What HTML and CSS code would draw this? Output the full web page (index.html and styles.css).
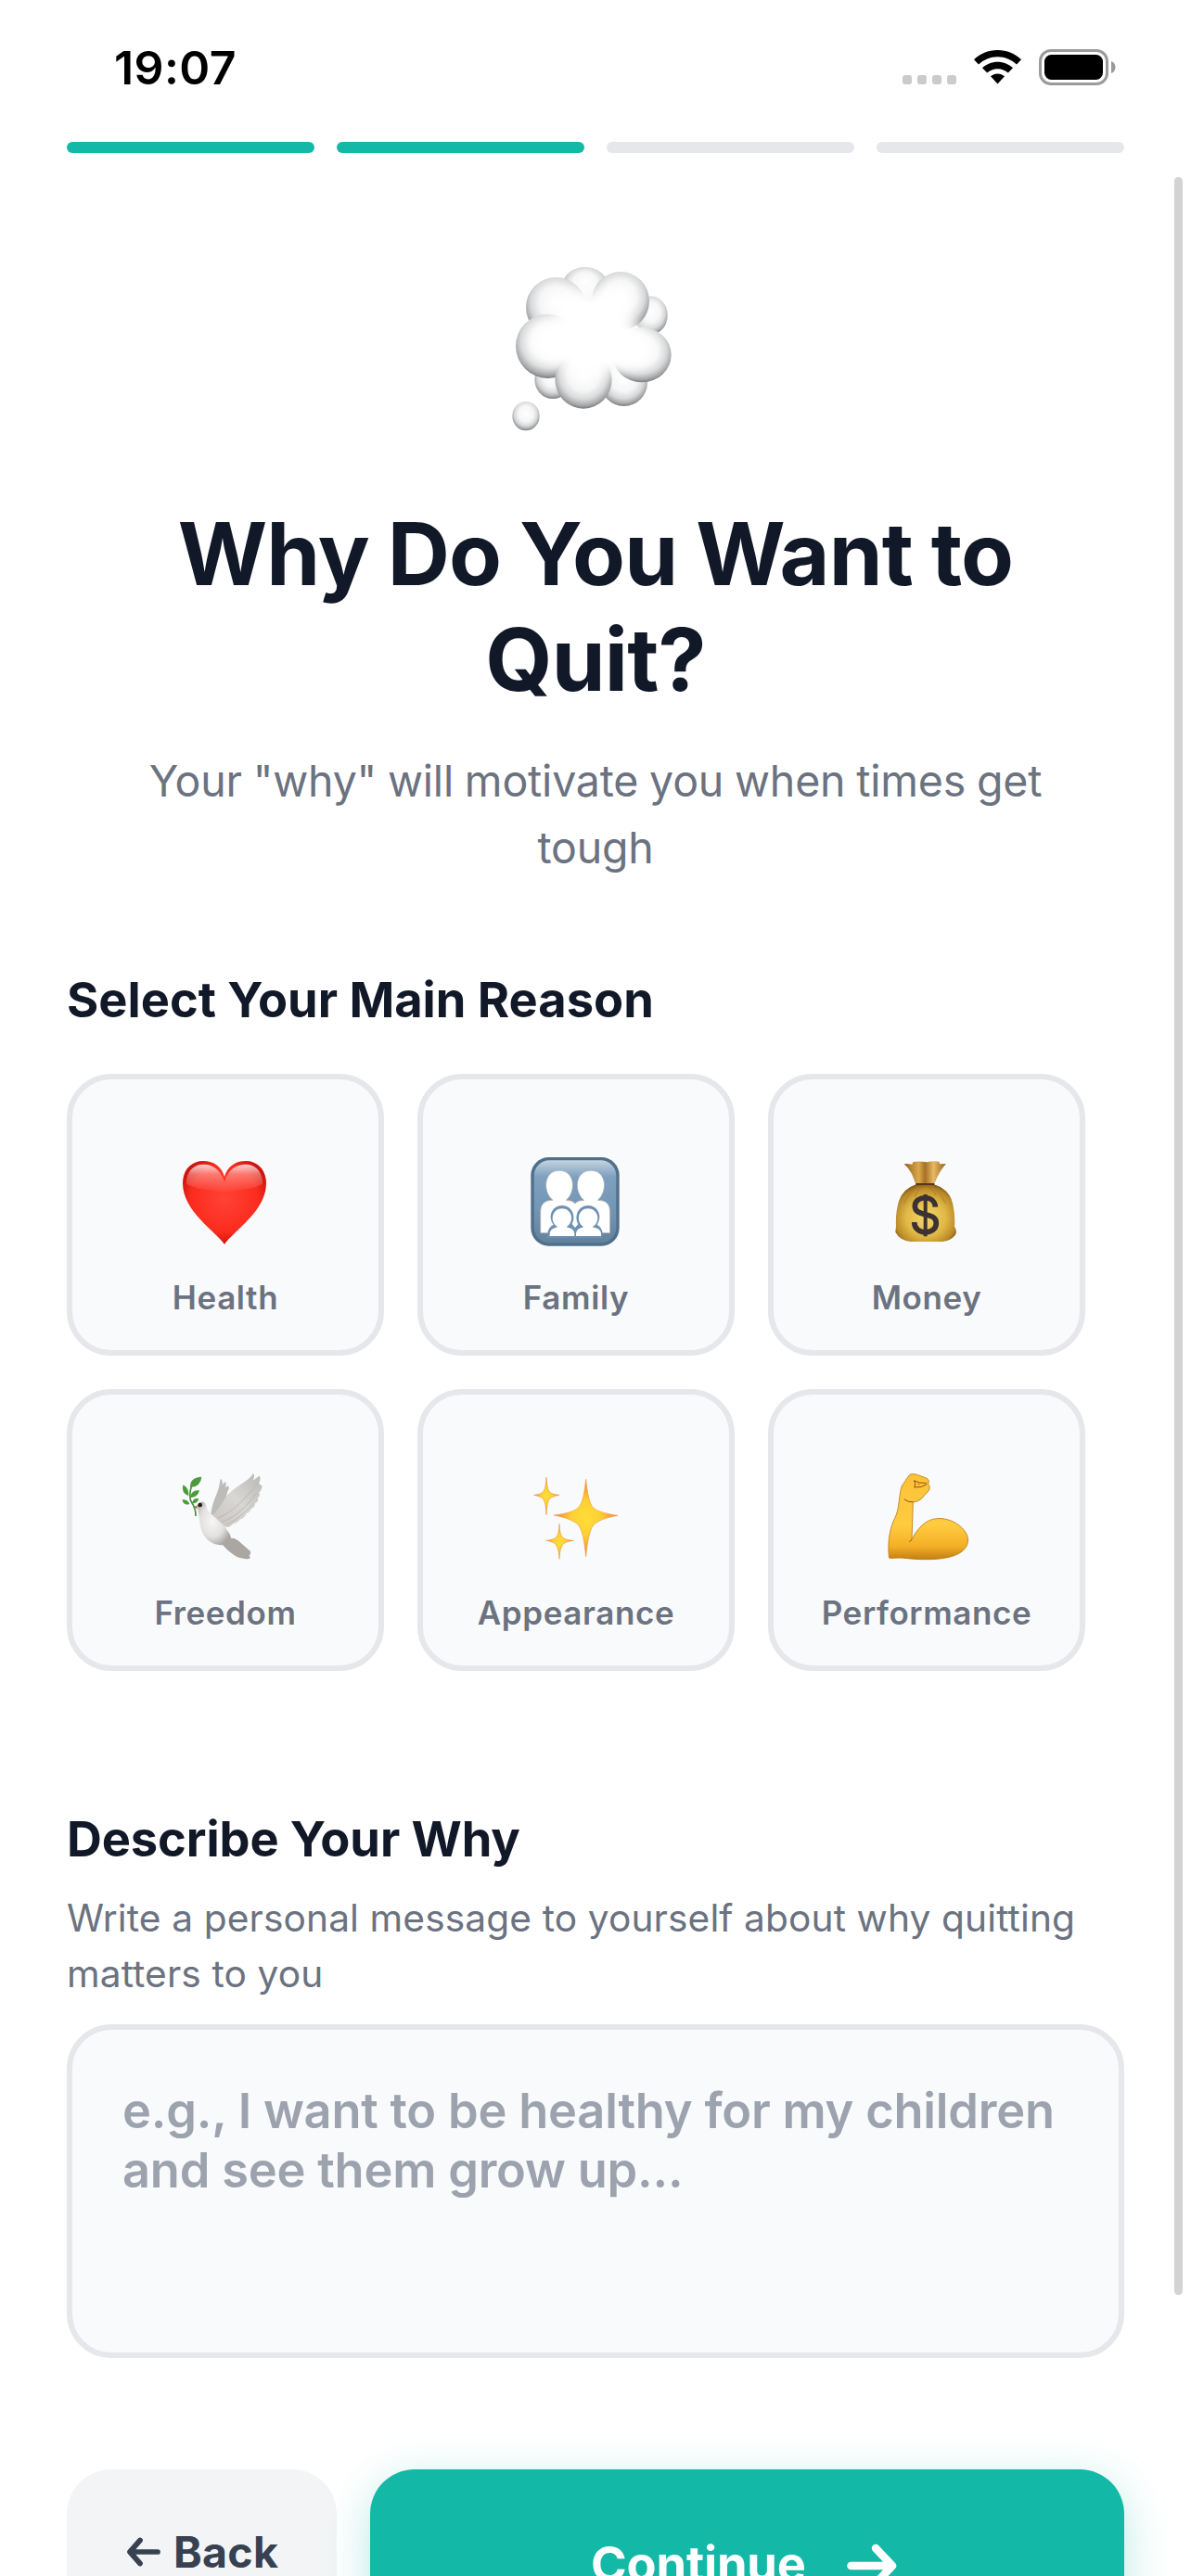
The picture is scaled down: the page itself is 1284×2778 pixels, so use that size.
FILE: index.html
```html
<!DOCTYPE html>
<html lang="en">
<head>
<meta charset="utf-8">
<title>Why Do You Want to Quit?</title>
<link rel="stylesheet" href="styles.css">
</head>
<body>
<div class="screen">
  <header class="status-bar">
    <span class="time">19:07</span>
    <div class="status-icons">
      <svg class="cellular" viewBox="0 0 58 10"><g fill="#cbcbcb"><rect width="10" height="10" rx="3"/><rect x="16" width="10" height="10" rx="3"/><rect x="32" width="10" height="10" rx="3"/><rect x="48" width="10" height="10" rx="3"/></g></svg>
      <svg class="wifi" viewBox="0 0 51 37"><path d="M25.500 0C35.500 0 44.500 4 51 10.300L46 15.500C40.500 10.300 33.500 7.200 25.500 7.200S10.500 10.300 5 15.500L0 10.300C6.500 4 15.500 0 25.500 0Z"/><path d="M25.500 12.800C31.800 12.800 37.600 15.300 42 19.300L36.800 24.600C33.700 21.800 29.800 20.200 25.500 20.200S17.300 21.800 14.200 24.600L9 19.300C13.400 15.300 19.200 12.800 25.500 12.800Z"/><path d="M25.500 25.400C28.400 25.400 31 26.500 33 28.300L25.500 36.600L18 28.300C20 26.500 22.600 25.400 25.500 25.400Z"/></svg>
      <svg class="battery" viewBox="0 0 83 39"><rect x="1.500" y="1.500" width="72" height="36" rx="11.500" fill="none" stroke="#9b9b9b" stroke-width="3"/><rect x="6" y="6" width="63" height="27" rx="7.500"/><path d="M78 13C84 15 84 24 78 26Z" fill="#9b9b9b"/></svg>
    </div>
  </header>
  <div class="progress"><i class="step done"></i><i class="step done"></i><i class="step"></i><i class="step"></i></div>

  <main class="content">
    <svg class="hero" viewBox="0 0 720 660">
      <defs>
        <radialGradient id="puff" cx=".5" cy=".42" r=".6"><stop offset="0" stop-color="#fff"/><stop offset=".45" stop-color="#f6f6f6"/><stop offset=".7" stop-color="#d8d9da"/><stop offset=".88" stop-color="#a3a5a7"/><stop offset="1" stop-color="#66686a"/></radialGradient>
        <filter id="soft" x="-30%" y="-30%" width="160%" height="160%"><feGaussianBlur stdDeviation="20"/></filter>
      </defs>
      <g fill="url(#puff)">
        <ellipse cx="332" cy="142" rx="72" ry="58"/>
        <ellipse cx="546" cy="240" rx="53" ry="62"/>
        <ellipse cx="228" cy="448" rx="59" ry="62"/>
        <ellipse cx="458" cy="458" rx="76" ry="76"/>
        <ellipse cx="238" cy="214" rx="97" ry="97"/>
        <ellipse cx="447" cy="194" rx="93" ry="95"/>
        <ellipse cx="212" cy="340" rx="104" ry="104"/>
        <ellipse cx="516" cy="368" rx="95" ry="89"/>
        <ellipse cx="327" cy="448" rx="92" ry="94"/>
        <ellipse cx="141" cy="566" rx="44" ry="47"/>
      </g>
      <path d="M225 190Q300 130 355 165Q450 120 485 190L475 250Q570 310 545 380Q470 445 410 420Q330 470 270 405Q160 400 160 330Q170 260 245 245Z" fill="#fff" filter="url(#soft)"/>
    </svg>
    <h1 class="title">Why Do You Want to<br>Quit?</h1>
    <p class="subtitle">Your "why" will motivate you when times get<br>tough</p>

    <h2 class="section-title">Select Your Main Reason</h2>
    <div class="reasons">
      <div class="card">
        <svg class="emoji" viewBox="81 60 336 336">
          <defs><radialGradient id="heart" cx=".5" cy=".45" r=".62"><stop offset="0" stop-color="#ff4234"/><stop offset=".65" stop-color="#fb2c1e"/><stop offset="1" stop-color="#b50b05"/></radialGradient>
          <linearGradient id="shine" x2="0" y2="1"><stop offset="0" stop-color="#fff" stop-opacity=".8"/><stop offset=".35" stop-color="#fff" stop-opacity=".35"/><stop offset="1" stop-color="#fff" stop-opacity="0"/></linearGradient></defs>
          <path d="M246 366C220 325 111 260 111 168C111 125 139 96 177 96C212 96 237 115 246 147C255 115 280 96 315 96C353 96 381 125 381 168C381 260 272 325 246 366Z" fill="url(#heart)"/>
          <path d="M123 170C122 130 146 107 178 107C212 107 236 128 246 165C256 128 280 107 314 107C346 107 370 130 369 170C330 190 290 190 246 200C202 190 162 190 123 170Z" fill="url(#shine)"/>
        </svg>
        <span class="label">Health</span>
      </div>
      <div class="card">
        <svg class="emoji" viewBox="75 60 336 336">
          <defs><linearGradient id="tile" x2="0" y2="1"><stop offset="0" stop-color="#c4d3df"/><stop offset=".2" stop-color="#7fa0be"/><stop offset=".6" stop-color="#7396b5"/><stop offset="1" stop-color="#62819c"/></linearGradient></defs>
          <rect x="97" y="84" width="286" height="287" rx="58" fill="#506f8a"/>
          <rect x="107" y="94" width="266" height="267" rx="50" fill="url(#tile)"/>
          <g fill="#fff" stroke="#a6a6a6" stroke-width="2">
            <path d="M128 329V260Q128 225 163 223H168C134 196 138 127 189 127S244 196 211 223Q230 223 240 233Q250 223 269 223C235 196 239 127 291 127S346 196 313 223H318Q353 225 353 260V329Z"/>
          </g>
          <path d="M151 345V329Q154 310 170 302C150 275 166 240 198 240S244 275 230 300L240 312L250 300C236 275 250 240 282 240S330 275 311 302Q326 310 329 329V345Z" fill="#6d91b1"/>
          <g fill="#fff"><path d="M158 339V330Q160 314 184 310C155 292 166 250 198 250S240 292 212 310Q236 314 238 330V339Z"/><path d="M243 339V330Q245 314 268 310C240 292 250 250 282 250S326 292 296 310Q322 314 324 330V339Z"/></g>
        </svg>
        <span class="label">Family</span>
      </div>
      <div class="card">
        <svg class="emoji" viewBox="69 60 336 336">
          <defs><radialGradient id="bag" cx=".5" cy=".58" r=".6"><stop offset="0" stop-color="#f2d76c"/><stop offset=".55" stop-color="#e0b845"/><stop offset=".85" stop-color="#b98a29"/><stop offset="1" stop-color="#7d5218"/></radialGradient>
          <linearGradient id="neck"><stop offset="0" stop-color="#93601f"/><stop offset=".35" stop-color="#dba94b"/><stop offset=".5" stop-color="#a87025"/><stop offset=".7" stop-color="#e6ba62"/><stop offset="1" stop-color="#93601f"/></linearGradient></defs>
          <path d="M203 173L189 138Q178 118 164 106Q176 104 190 107L193 99Q212 96 238 100Q258 94 277 98L280 106L300 105Q284 122 273 145L260 173Z" fill="url(#neck)"/>
          <path d="M203 172H261Q312 188 322 236Q330 276 327 308Q337 322 330 335Q312 357 282 357H184Q150 352 136 326L138 307Q136 262 147 226Q160 186 203 172Z" fill="url(#bag)"/>
          <g fill="none" stroke="#ab7b24" stroke-width="5" opacity=".5"><path d="M211 178Q179 199 164 233M225 178Q207 190 198 213M249 178Q281 195 298 233M237 178Q260 190 267 207"/></g>
          <path d="M202 171H262" stroke="#59371a" stroke-width="6"/>
          <path d="M265 245C264 205 199 207 199 242C199 280 268 258 268 297C268 337 197 337 197 294" fill="none" stroke="#3c3133" stroke-width="17"/><path d="M233 204V340" stroke="#3c3133" stroke-width="12"/>
        </svg>
        <span class="label">Money</span>
      </div>
      <div class="card">
        <svg class="emoji" viewBox="81 60 336 336">
          <defs><linearGradient id="wing" x1="1" y1="0" x2="0" y2="1"><stop offset="0" stop-color="#b9b7b3"/><stop offset=".5" stop-color="#d9d7d4"/><stop offset="1" stop-color="#c7c4c1"/></linearGradient>
          <radialGradient id="dove" cx=".45" cy=".45" r=".6"><stop offset="0" stop-color="#f7f6f5"/><stop offset=".6" stop-color="#e3e1df"/><stop offset="1" stop-color="#aaa7a3"/></radialGradient></defs>
          <path d="M202 220C206 180 222 155 228 132L233 105Q241 106 239 124L248 114Q254 118 249 132L258 127Q264 133 256 145L245 190L218 226Z" fill="#bebcb8"/>
          <path d="M240 318Q262 284 290 304L330 339Q332 350 325 352Q332 358 326 363Q298 366 278 352Q256 338 240 318Z" fill="#aaa7a3"/>
          <path d="M187 190C182 174 163 174 158 192C161 208 164 220 166 242C169 285 195 316 235 319C263 320 273 303 263 283L246 258L208 221C194 214 188 204 187 190Z" fill="url(#dove)"/>
          <path d="M208 222C235 196 240 176 258 154C285 126 324 112 339 86Q346 95 338 110L358 95Q366 100 357 119L367 127Q368 140 357 149Q364 158 353 167Q359 177 344 184Q347 195 332 202Q330 213 316 218Q310 232 297 235Q287 248 273 250Q261 266 246 258Z" fill="url(#wing)"/>
          <path d="M226 231C275 210 320 163 352 119M237 244C285 228 320 190 350 151M251 252C285 240 315 210 340 184" fill="none" stroke="#bbb8b4" stroke-width="3"/>
          <circle cx="167" cy="189" r="7" fill="#211a17"/><path d="M158 190L145 196L158 201Z" fill="#b5745a"/>
          <path d="M153 225C154 206 148 193 140 181C130 166 134 146 139 128" fill="none" stroke="#4a9140" stroke-width="5"/>
          <g fill="#4b9a3c"><path d="M136 132Q132 100 172 98Q169 130 136 132Z"/><path d="M130 160Q105 150 112 124Q132 134 130 160Z"/><path d="M134 165Q140 138 165 142Q159 166 134 165Z"/><path d="M133 186Q115 193 109 172Q128 170 133 186Z"/><path d="M141 184Q145 164 163 169Q159 185 141 184Z"/></g>
        </svg>
        <span class="label">Freedom</span>
      </div>
      <div class="card">
        <svg class="emoji" viewBox="75 60 336 336">
          <defs><radialGradient id="star"><stop offset="0" stop-color="#ffdd3a"/><stop offset=".45" stop-color="#fdd132"/><stop offset=".75" stop-color="#f6a532"/><stop offset="1" stop-color="#f07f45"/></radialGradient></defs>
          <g fill="url(#star)" stroke="#f29a3a" stroke-width="2" stroke-linejoin="round">
            <path d="M275 106C280 154 286 184 298 197C312 210 338 217 378 223C338 230 313 240 299 254C286 272 280 306 275 356C270 306 264 272 251 254C237 240 212 230 172 222C212 217 237 210 251 197C264 184 270 154 275 106Z"/>
            <path d="M147 99C149 127 151 139 158 147C164 153 174 155 189 157C174 159 164 163 158 169C151 178 149 192 147 221C145 192 143 178 136 169C130 163 121 159 107 157C121 155 130 153 136 147C143 139 145 127 147 99Z"/>
            <path d="M189 250C190 276 194 288 200 294C207 300 217 302 235 304C217 306 207 311 200 317C194 326 190 340 189 364C188 340 184 326 178 317C171 311 163 306 146 304C163 302 171 300 178 294C184 288 188 276 189 250Z"/>
          </g>
        </svg>
        <span class="label">Appearance</span>
      </div>
      <div class="card">
        <svg class="emoji" viewBox="69 60 336 336">
          <defs><linearGradient id="skin" x2="0" y2="1"><stop offset="0" stop-color="#fcc238"/><stop offset=".6" stop-color="#ffcb40"/><stop offset=".85" stop-color="#f3af25"/><stop offset="1" stop-color="#c47e12"/></linearGradient></defs>
          <path d="M115 357C110 300 120 260 134 232C149 203 146 165 156 129L181 92Q188 86 203 90L238 103Q248 109 242 121Q250 129 245 141L219 170Q207 179 193 180L189 301C205 267 234 235 269 233C320 228 370 267 371 302C370 341 325 364 245 365C198 366 172 361 153 360L122 361Q115 362 115 357Z" fill="url(#skin)" stroke="#bd7a14" stroke-width="2.500"/>
          <path d="M196 110L214 117L236 118M196 110Q205 120 197 132Q220 134 238 122M210 120L213 124M164 170Q179 182 193 179M189 301L181 308" fill="none" stroke="#91500f" stroke-width="3"/>
        </svg>
        <span class="label">Performance</span>
      </div>
    </div>

    <h2 class="section-title">Describe Your Why</h2>
    <p class="hint">Write a personal message to yourself about why quitting<br>matters to you</p>
    <div class="textbox">e.g., I want to be healthy for my children<br>and see them grow up...</div>

    <footer class="actions">
      <div class="btn back"><svg class="arrow-back" viewBox="0 0 38 32"><path d="M34 16H5M15 3.500L4 16L15 28.500" fill="none" stroke="#374151" stroke-width="5.700" stroke-linecap="round" stroke-linejoin="round"/></svg><span>Back</span></div>
      <div class="btn next"><span>Continue</span><svg class="arrow-next" viewBox="0 0 54 48"><path d="M4.500 24H48M31 5L49 24L31 43" fill="none" stroke="#fff" stroke-width="8.500" stroke-linecap="round" stroke-linejoin="round"/></svg></div>
    </footer>
  </main>
  <div class="scrollbar"></div>
</div>
</body>
</html>
```
FILE: styles.css
```css
* { box-sizing: border-box; }
html, body { margin: 0; height: 2778px; overflow: hidden; }
body { background: #fff; font-family: Inter, "Liberation Sans", sans-serif; color: #111827; }
h1, h2, p { margin: 0; }
svg { display: block; flex: none; }

.screen { position: relative; height: 2778px; padding: 0 72px; overflow: hidden; }
.status-bar { display: flex; justify-content: space-between; height: 153px; padding: 53px 9px 0 51px; }
.time { font-size: 50px; line-height: 40px; font-weight: 600; letter-spacing: .4px; color: #000; }
.status-icons { display: flex; align-items: flex-start; }
.cellular { width: 58px; height: 10px; margin: 28px 19px 0 0; }
.wifi { width: 51px; height: 37px; margin: 1px 19px 0 0; }
.battery { width: 83px; height: 39px; }

.progress { display: flex; gap: 24px; }
.step { flex: 1; height: 12px; border-radius: 6px; background: #e5e7eb; }
.step.done { background: #14b8a6; }

.content { padding-top: 95px; }
.hero { width: 240px; height: 220px; margin: 0 0 60px 448px; }
.title { font-size: 93px; line-height: 114px; font-weight: 700; letter-spacing: -.8px; word-spacing: -1.500px; text-align: center; }
.subtitle { margin-top: 38px; font-size: 46.500px; line-height: 72px; letter-spacing: -.2px; word-spacing: -1px; color: #6b7280; text-align: center; }
.section-title { margin-top: 95px; font-size: 52.400px; line-height: 66px; font-weight: 700; }

.reasons { display: grid; grid-template-columns: repeat(3, 342px); gap: 36px; margin: 47px 0 148px; }
.card { display: flex; flex-direction: column; align-items: center; height: 304px; padding-top: 76px; border: 6px solid #e5e7eb; border-radius: 48px; background: #f9fafb; }
.emoji { width: 112px; height: 112px; }
.label { margin-top: 26px; font-size: 35px; line-height: 42px; font-weight: 600; letter-spacing: .6px; color: #6b7280; white-space: nowrap; }

.reasons + .section-title { margin-top: 0; letter-spacing: -.1px; }
.hint { margin-top: 23px; font-size: 40.700px; line-height: 60px; letter-spacing: .1px; color: #6b7280; white-space: nowrap; }
.textbox { height: 360px; margin-top: 24px; padding: 55px 54px; border: 6px solid #e5e7eb; border-radius: 48px; background: #f9fafb; font-size: 52.400px; line-height: 64px; font-weight: 600; letter-spacing: -.22px; color: #9ca3af; white-space: nowrap; }

.actions { display: flex; gap: 36px; margin-top: 120px; }
.btn { display: flex; height: 206px; border-radius: 48px; font-weight: 700; white-space: nowrap; }
.back { width: 291px; padding: 59px 0 0 64px; gap: 13px; background: #f3f4f6; color: #374151; font-size: 46.500px; line-height: 60px; letter-spacing: .3px; }
.arrow-back { width: 38px; height: 32px; margin-top: 14px; }
.next { flex: 1; padding: 69px 0 0 238px; gap: 44px; background: #14b8a6; color: #fff; font-size: 52.400px; line-height: 66px; letter-spacing: -.2px; box-shadow: 0 12px 48px rgba(20, 184, 166, .3); }
.arrow-next { width: 54px; height: 48px; margin-top: 11px; }

.scrollbar { position: absolute; top: 191px; left: 1266px; width: 9px; height: 2284px; border-radius: 5px; background: #d3d3d3; }
```
